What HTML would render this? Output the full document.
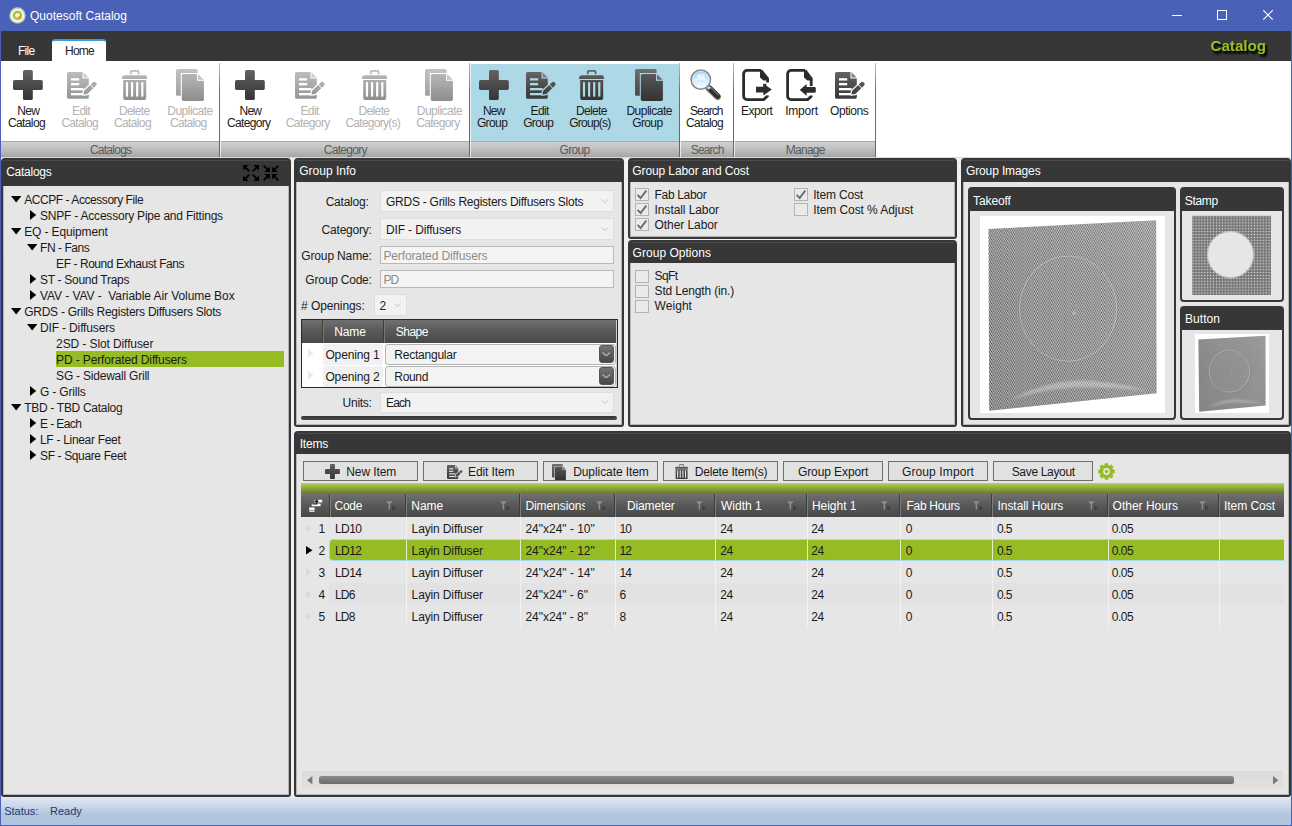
<!DOCTYPE html>
<html>
<head>
<meta charset="utf-8">
<title>Quotesoft Catalog</title>
<style>
*{box-sizing:border-box;margin:0;padding:0}
html,body{width:1292px;height:826px;overflow:hidden;background:#f0f0f0}
body{font-family:"Liberation Sans",sans-serif;font-size:12px;color:#1a1a1a;position:relative}
.abs{position:absolute}
.t{position:absolute;white-space:nowrap;line-height:14px;font-size:12px}
#win{position:absolute;left:0;top:0;width:1292px;height:826px;background:#f0f0f0;overflow:hidden}
.panel{position:absolute;background:#e6e6e6;border:2px solid #373737;border-radius:4px 4px 3px 3px}
.ph{position:absolute;background:#373737}
.combo{position:absolute;background:#f2f2f2;border:1px solid #dedede}
.tb{position:absolute;background:#f4f4f4;border:1px solid #b9b9b9}
.cb{position:absolute;width:14px;height:13px;background:#eaeaea;border:1px solid #b4b4b4}
.btn{position:absolute;top:461px;height:20px;background:#e1e1e1;border:1px solid #6f6f6f}
.gh{position:absolute;background:linear-gradient(#707070 0%,#5a5a5a 45%,#484848 100%)}
</style>
</head>
<body>
<div id="win">
<svg width="0" height="0" style="position:absolute"><defs>
<linearGradient id="gE" gradientUnits="userSpaceOnUse" x1="0" y1="0" x2="0" y2="32"><stop offset="0" stop-color="#646464"/><stop offset="0.45" stop-color="#4a4a4a"/><stop offset="1" stop-color="#333"/></linearGradient>
<linearGradient id="gD" gradientUnits="userSpaceOnUse" x1="0" y1="0" x2="0" y2="32"><stop offset="0" stop-color="#bcbcbc"/><stop offset="0.45" stop-color="#a8a8a8"/><stop offset="1" stop-color="#8c8c8c"/></linearGradient>
<linearGradient id="gLens" x1="0" y1="0" x2="0" y2="1"><stop offset="0" stop-color="#8fd0f6"/><stop offset="0.45" stop-color="#c9e9fb"/><stop offset="1" stop-color="#ffffff"/></linearGradient>
<linearGradient id="gHandle" x1="0" y1="0" x2="1" y2="0"><stop offset="0" stop-color="#8a8a8a"/><stop offset="0.5" stop-color="#3a3a3a"/><stop offset="1" stop-color="#222"/></linearGradient>
<linearGradient id="gPE" gradientUnits="userSpaceOnUse" x1="0" y1="0" x2="17" y2="0"><stop offset="0" stop-color="#3c3c3c"/><stop offset="1" stop-color="#555"/></linearGradient>
<linearGradient id="gPD" gradientUnits="userSpaceOnUse" x1="0" y1="0" x2="17" y2="0"><stop offset="0" stop-color="#959595"/><stop offset="1" stop-color="#aeaeae"/></linearGradient>
</defs></svg>
<div class="abs" style="left:0px;top:0px;width:1292px;height:31px;background:#4961b6"></div>
<svg class="abs" style="left:9px;top:7px" width="17" height="17" viewBox="0 0 17 17"><circle cx="8.5" cy="8.5" r="8.2" fill="#c6c8bc"/><circle cx="8.5" cy="8.5" r="6.8" fill="#f3f3e6"/><circle cx="8.5" cy="8.4" r="3.5" fill="none" stroke="#a6be2c" stroke-width="2.1"/><path d="M9.4 9.4L12 12" stroke="#e0902a" stroke-width="1.6"/></svg>
<div class="t" style="left:30.00px;top:8.84px;letter-spacing:0.016px;color:#fff;">Quotesoft Catalog</div>
<svg class="abs" style="left:1172px;top:10px" width="102" height="11" viewBox="0 0 102 11" fill="none" stroke="#fff" stroke-width="1"><path d="M0 5.5H10"/><rect x="45.5" y="0.5" width="9" height="9"/><path d="M91.3 0.3L100.7 9.7M100.7 0.3L91.3 9.7" stroke-width="1.15"/></svg>
<div class="abs" style="left:1px;top:31px;width:1290px;height:30px;background:#373737"></div>
<div class="t" style="left:18.00px;top:43.84px;letter-spacing:-0.709px;color:#fff;">File</div>
<div class="abs" style="left:52px;top:39px;width:54px;height:22px;background:#fff;border-radius:3px 3px 0 0;border-top:2px solid #3f9ad6"></div>
<div class="t" style="left:65.00px;top:43.84px;letter-spacing:-0.752px;color:#222;">Home</div>
<div class="t" style="left:1210.50px;top:36.80px;font-size:15px;line-height:17px;letter-spacing:0.070px;color:#97bf27;font-weight:bold;text-shadow:2px 2.5px 2px #000,1px 1px 1px #111;">Catalog</div>
<div class="abs" style="left:1px;top:61px;width:1290px;height:96px;background:#fff"></div>
<div class="abs" style="left:1px;top:141px;width:875px;height:16px;background:linear-gradient(#cfcfcf,#c2c2c2 40%,#a6a6a6);border-top:1px solid #a9a9a9"></div>
<div class="abs" style="left:1px;top:157px;width:1290px;height:1px;background:#d6d6d6"></div>
<div class="abs" style="left:470px;top:64px;width:209px;height:77px;background:#add8e6"></div>
<div class="abs" style="left:219px;top:63px;width:1px;height:94px;background:linear-gradient(#bdbdbd,#6e6e6e 30%,#666)"></div>
<div class="abs" style="left:220px;top:63px;width:1px;height:94px;background:#fff;opacity:.7"></div>
<div class="abs" style="left:469px;top:63px;width:1px;height:94px;background:linear-gradient(#bdbdbd,#6e6e6e 30%,#666)"></div>
<div class="abs" style="left:470px;top:63px;width:1px;height:94px;background:#fff;opacity:.7"></div>
<div class="abs" style="left:679px;top:63px;width:1px;height:94px;background:linear-gradient(#bdbdbd,#6e6e6e 30%,#666)"></div>
<div class="abs" style="left:680px;top:63px;width:1px;height:94px;background:#fff;opacity:.7"></div>
<div class="abs" style="left:733px;top:63px;width:1px;height:94px;background:linear-gradient(#bdbdbd,#6e6e6e 30%,#666)"></div>
<div class="abs" style="left:734px;top:63px;width:1px;height:94px;background:#fff;opacity:.7"></div>
<div class="abs" style="left:875px;top:63px;width:1px;height:94px;background:linear-gradient(#bdbdbd,#6e6e6e 30%,#666)"></div>
<div class="abs" style="left:876px;top:63px;width:1px;height:94px;background:#fff;opacity:.7"></div>
<svg class="abs" style="left:13px;top:70px;" width="30" height="30" viewBox="0 0 30 30"><g fill="url(#gE)"><rect x="10" y="0" width="9.8" height="30" rx="1.6"/><rect x="0" y="10.1" width="29.8" height="9.8" rx="1.6"/></g></svg>
<div class="t" style="left:17.30px;top:103.84px;letter-spacing:-0.702px;color:#1a1a1a;">New</div>
<div class="t" style="left:8.00px;top:115.84px;letter-spacing:-0.623px;color:#1a1a1a;">Catalog</div>
<svg class="abs" style="left:66.8px;top:72px;" width="30" height="27" viewBox="0 0 30 27"><path fill="url(#gD)" d="M1.6 0H15.9L21.8 5.9V25.2a1.6 1.6 0 0 1-1.6 1.6H1.6A1.6 1.6 0 0 1 0 25.2V1.6A1.6 1.6 0 0 1 1.6 0Z"/><path fill="#fff" d="M15.5 -0.2V6.5H22V-0.2Z"/><path fill="#cdcdcd" d="M16.5 0.3L21.7 5.5H16.5Z"/><g fill="#fff"><rect x="4" y="6.2" width="8.2" height="2.3"/><rect x="4" y="11" width="8.2" height="2.3"/><rect x="4" y="16" width="12.5" height="2.3"/><rect x="4" y="21" width="12.5" height="2.3"/></g><g transform="translate(16.3 22.7) rotate(-43.5)"><path d="M0.2 0L3.4 -2.25H11.6V2.25H3.4ZM12.5 -2.25H15.2A2.25 2.25 0 0 1 15.2 2.25H12.5Z" fill="#fff" stroke="#fff" stroke-width="2.6" stroke-linejoin="round"/><path d="M0.2 0L3.4 -2.25H11.6V2.25H3.4ZM12.5 -2.25H15.2A2.25 2.25 0 0 1 15.2 2.25H12.5Z" fill="url(#gPD)"/></g></svg>
<div class="t" style="left:72.10px;top:103.84px;letter-spacing:-0.719px;color:#b2b2b2;">Edit</div>
<div class="t" style="left:61.40px;top:115.84px;letter-spacing:-0.694px;color:#b2b2b2;">Catalog</div>
<svg class="abs" style="left:122px;top:70px;" width="25.4" height="30" viewBox="0 0 25.4 30"><path d="M8.8 4.2V1.9a1 1 0 0 1 1-1H15.6a1 1 0 0 1 1 1V4.2" fill="none" stroke="url(#gD)" stroke-width="1.7"/><path fill="url(#gD)" d="M2 5.2H23.4L25.4 7V8.9H0V7Z"/><path fill="url(#gD)" d="M1.2 10.1H24.2V27.4a2.6 2.6 0 0 1-2.6 2.6H3.8a2.6 2.6 0 0 1-2.6-2.6Z"/><g fill="#fff"><rect x="3.9" y="12.2" width="2.2" height="14.4"/><rect x="9" y="12.2" width="2.2" height="14.4"/><rect x="14.1" y="12.2" width="2.2" height="14.4"/><rect x="19.2" y="12.2" width="2.2" height="14.4"/></g></svg>
<div class="t" style="left:118.90px;top:103.84px;letter-spacing:-0.681px;color:#b2b2b2;">Delete</div>
<div class="t" style="left:113.90px;top:115.84px;letter-spacing:-0.609px;color:#b2b2b2;">Catalog</div>
<svg class="abs" style="left:176.2px;top:69px;" width="29" height="32" viewBox="0 0 29 32"><rect x="0" y="0" width="21.6" height="26.8" rx="1.6" fill="url(#gD)" opacity="0.9"/><rect x="4.8" y="4" width="24" height="28" fill="#fff"/><path fill="url(#gD)" d="M7.4 5H21.4L27.9 11.2V30.3a1.6 1.6 0 0 1-1.6 1.6H7.4a1.6 1.6 0 0 1-1.6-1.6V6.6A1.6 1.6 0 0 1 7.4 5Z"/><path fill="#fff" d="M21 4.8V11.8H28.2V4.8Z"/><path fill="#c4c4c4" d="M22 5.2L27.8 10.8H22Z"/></svg>
<div class="t" style="left:167.30px;top:103.84px;letter-spacing:-0.514px;color:#b2b2b2;">Duplicate</div>
<div class="t" style="left:170.00px;top:115.84px;letter-spacing:-0.694px;color:#b2b2b2;">Catalog</div>
<svg class="abs" style="left:235px;top:70px;" width="30" height="30" viewBox="0 0 30 30"><g fill="url(#gE)"><rect x="10" y="0" width="9.8" height="30" rx="1.6"/><rect x="0" y="10.1" width="29.8" height="9.8" rx="1.6"/></g></svg>
<div class="t" style="left:239.50px;top:103.84px;letter-spacing:-0.735px;color:#1a1a1a;">New</div>
<div class="t" style="left:227.10px;top:115.84px;letter-spacing:-0.686px;color:#1a1a1a;">Category</div>
<svg class="abs" style="left:295px;top:72px;" width="30" height="27" viewBox="0 0 30 27"><path fill="url(#gD)" d="M1.6 0H15.9L21.8 5.9V25.2a1.6 1.6 0 0 1-1.6 1.6H1.6A1.6 1.6 0 0 1 0 25.2V1.6A1.6 1.6 0 0 1 1.6 0Z"/><path fill="#fff" d="M15.5 -0.2V6.5H22V-0.2Z"/><path fill="#cdcdcd" d="M16.5 0.3L21.7 5.5H16.5Z"/><g fill="#fff"><rect x="4" y="6.2" width="8.2" height="2.3"/><rect x="4" y="11" width="8.2" height="2.3"/><rect x="4" y="16" width="12.5" height="2.3"/><rect x="4" y="21" width="12.5" height="2.3"/></g><g transform="translate(16.3 22.7) rotate(-43.5)"><path d="M0.2 0L3.4 -2.25H11.6V2.25H3.4ZM12.5 -2.25H15.2A2.25 2.25 0 0 1 15.2 2.25H12.5Z" fill="#fff" stroke="#fff" stroke-width="2.6" stroke-linejoin="round"/><path d="M0.2 0L3.4 -2.25H11.6V2.25H3.4ZM12.5 -2.25H15.2A2.25 2.25 0 0 1 15.2 2.25H12.5Z" fill="url(#gPD)"/></g></svg>
<div class="t" style="left:300.50px;top:103.84px;letter-spacing:-0.644px;color:#b2b2b2;">Edit</div>
<div class="t" style="left:285.80px;top:115.84px;letter-spacing:-0.599px;color:#b2b2b2;">Category</div>
<svg class="abs" style="left:362px;top:70px;" width="25.4" height="30" viewBox="0 0 25.4 30"><path d="M8.8 4.2V1.9a1 1 0 0 1 1-1H15.6a1 1 0 0 1 1 1V4.2" fill="none" stroke="url(#gD)" stroke-width="1.7"/><path fill="url(#gD)" d="M2 5.2H23.4L25.4 7V8.9H0V7Z"/><path fill="url(#gD)" d="M1.2 10.1H24.2V27.4a2.6 2.6 0 0 1-2.6 2.6H3.8a2.6 2.6 0 0 1-2.6-2.6Z"/><g fill="#fff"><rect x="3.9" y="12.2" width="2.2" height="14.4"/><rect x="9" y="12.2" width="2.2" height="14.4"/><rect x="14.1" y="12.2" width="2.2" height="14.4"/><rect x="19.2" y="12.2" width="2.2" height="14.4"/></g></svg>
<div class="t" style="left:358.50px;top:103.84px;letter-spacing:-0.631px;color:#b2b2b2;">Delete</div>
<div class="t" style="left:345.40px;top:115.84px;letter-spacing:-0.726px;color:#b2b2b2;">Category(s)</div>
<svg class="abs" style="left:425px;top:69px;" width="29" height="32" viewBox="0 0 29 32"><rect x="0" y="0" width="21.6" height="26.8" rx="1.6" fill="url(#gD)" opacity="0.9"/><rect x="4.8" y="4" width="24" height="28" fill="#fff"/><path fill="url(#gD)" d="M7.4 5H21.4L27.9 11.2V30.3a1.6 1.6 0 0 1-1.6 1.6H7.4a1.6 1.6 0 0 1-1.6-1.6V6.6A1.6 1.6 0 0 1 7.4 5Z"/><path fill="#fff" d="M21 4.8V11.8H28.2V4.8Z"/><path fill="#c4c4c4" d="M22 5.2L27.8 10.8H22Z"/></svg>
<div class="t" style="left:416.80px;top:103.84px;letter-spacing:-0.525px;color:#b2b2b2;">Duplicate</div>
<div class="t" style="left:416.20px;top:115.84px;letter-spacing:-0.674px;color:#b2b2b2;">Category</div>
<svg class="abs" style="left:479px;top:70px;" width="30" height="30" viewBox="0 0 30 30"><g fill="url(#gE)"><rect x="10" y="0" width="9.8" height="30" rx="1.6"/><rect x="0" y="10.1" width="29.8" height="9.8" rx="1.6"/></g></svg>
<div class="t" style="left:482.90px;top:103.84px;letter-spacing:-0.802px;color:#1a1a1a;">New</div>
<div class="t" style="left:476.90px;top:115.84px;letter-spacing:-0.610px;color:#1a1a1a;">Group</div>
<svg class="abs" style="left:526px;top:72px;" width="30" height="27" viewBox="0 0 30 27"><path fill="url(#gE)" d="M1.6 0H15.9L21.8 5.9V25.2a1.6 1.6 0 0 1-1.6 1.6H1.6A1.6 1.6 0 0 1 0 25.2V1.6A1.6 1.6 0 0 1 1.6 0Z"/><path fill="#add8e6" d="M15.5 -0.2V6.5H22V-0.2Z"/><path fill="#808080" d="M16.5 0.3L21.7 5.5H16.5Z"/><g fill="#add8e6"><rect x="4" y="6.2" width="8.2" height="2.3"/><rect x="4" y="11" width="8.2" height="2.3"/><rect x="4" y="16" width="12.5" height="2.3"/><rect x="4" y="21" width="12.5" height="2.3"/></g><g transform="translate(16.3 22.7) rotate(-43.5)"><path d="M0.2 0L3.4 -2.25H11.6V2.25H3.4ZM12.5 -2.25H15.2A2.25 2.25 0 0 1 15.2 2.25H12.5Z" fill="#add8e6" stroke="#add8e6" stroke-width="2.6" stroke-linejoin="round"/><path d="M0.2 0L3.4 -2.25H11.6V2.25H3.4ZM12.5 -2.25H15.2A2.25 2.25 0 0 1 15.2 2.25H12.5Z" fill="url(#gPE)"/></g></svg>
<div class="t" style="left:530.60px;top:103.84px;letter-spacing:-0.619px;color:#1a1a1a;">Edit</div>
<div class="t" style="left:523.20px;top:115.84px;letter-spacing:-0.670px;color:#1a1a1a;">Group</div>
<svg class="abs" style="left:579px;top:70px;" width="25.4" height="30" viewBox="0 0 25.4 30"><path d="M8.8 4.2V1.9a1 1 0 0 1 1-1H15.6a1 1 0 0 1 1 1V4.2" fill="none" stroke="url(#gE)" stroke-width="1.7"/><path fill="url(#gE)" d="M2 5.2H23.4L25.4 7V8.9H0V7Z"/><path fill="url(#gE)" d="M1.2 10.1H24.2V27.4a2.6 2.6 0 0 1-2.6 2.6H3.8a2.6 2.6 0 0 1-2.6-2.6Z"/><g fill="#add8e6"><rect x="3.9" y="12.2" width="2.2" height="14.4"/><rect x="9" y="12.2" width="2.2" height="14.4"/><rect x="14.1" y="12.2" width="2.2" height="14.4"/><rect x="19.2" y="12.2" width="2.2" height="14.4"/></g></svg>
<div class="t" style="left:576.00px;top:103.84px;letter-spacing:-0.665px;color:#1a1a1a;">Delete</div>
<div class="t" style="left:569.20px;top:115.84px;letter-spacing:-0.743px;color:#1a1a1a;">Group(s)</div>
<svg class="abs" style="left:635px;top:69px;" width="29" height="32" viewBox="0 0 29 32"><rect x="0" y="0" width="21.6" height="26.8" rx="1.6" fill="url(#gE)" opacity="0.9"/><rect x="4.8" y="4" width="24" height="28" fill="#add8e6"/><path fill="url(#gE)" d="M7.4 5H21.4L27.9 11.2V30.3a1.6 1.6 0 0 1-1.6 1.6H7.4a1.6 1.6 0 0 1-1.6-1.6V6.6A1.6 1.6 0 0 1 7.4 5Z"/><path fill="#add8e6" d="M21 4.8V11.8H28.2V4.8Z"/><path fill="#6e6e6e" d="M22 5.2L27.8 10.8H22Z"/></svg>
<div class="t" style="left:626.40px;top:103.84px;letter-spacing:-0.503px;color:#1a1a1a;">Duplicate</div>
<div class="t" style="left:632.20px;top:115.84px;letter-spacing:-0.610px;color:#1a1a1a;">Group</div>
<svg class="abs" style="left:690px;top:69px;" width="32" height="32" viewBox="0 0 32 32"><path d="M19.2 19.6L27.6 27.6" stroke="#777" stroke-width="6.6" stroke-linecap="round"/><path d="M19.6 19.2L27.6 27.2" stroke="#2e2e2e" stroke-width="5.2" stroke-linecap="round"/><path d="M20.6 18.4L28.2 25.8" stroke="#777" stroke-width="1.6" stroke-linecap="round" opacity="0.8"/><path d="M17.2 17.2L19.8 19.8" stroke="#d8d8d8" stroke-width="3" /><circle cx="10.8" cy="10.6" r="9.6" fill="url(#gLens)" stroke="#858585" stroke-width="1.7"/><circle cx="10.8" cy="10.6" r="8.5" fill="none" stroke="#e8f4fc" stroke-width="0.8" opacity="0.8"/><path d="M4.6 12.5A6.4 6.4 0 0 1 17 12.5A9 6 0 0 0 4.6 12.5Z" fill="#fff" opacity="0.55"/><ellipse cx="10.8" cy="7" rx="4" ry="2.4" fill="#fff" opacity="0.55"/></svg>
<div class="t" style="left:690.00px;top:103.84px;letter-spacing:-0.900px;color:#1a1a1a;">Search</div>
<div class="t" style="left:686.00px;top:115.84px;letter-spacing:-0.594px;color:#1a1a1a;">Catalog</div>
<svg class="abs" style="left:742px;top:69px;" width="31" height="32" viewBox="0 0 31 32"><path d="M19 1.4H5a3.4 3.4 0 0 0-3.4 3.4V27.2A3.4 3.4 0 0 0 5 30.6H21.6L25.6 27V26.6M25.6 13.4V9.6L19 1.4" fill="none" stroke="#2c2c2c" stroke-width="2.8" stroke-linejoin="round"/><path fill="#2c2c2c" d="M18 1.2L26.6 9.4V11.6H21.4L18 8.6Z"/><path fill="#2c2c2c" d="M14 17.8H21.4V14.7L29.8 20.6L21.4 26.6V23.6H14Z"/><path fill="#2c2c2c" d="M21.4 14.8H24.2V17.2H21.4Z"/></svg>
<div class="t" style="left:741.00px;top:103.84px;letter-spacing:-0.547px;color:#1a1a1a;">Export</div>
<svg class="abs" style="left:786px;top:69px;" width="31" height="32" viewBox="0 0 31 32"><path d="M19 1.4H5a3.4 3.4 0 0 0-3.4 3.4V27.2A3.4 3.4 0 0 0 5 30.6H21.6L25.2 27.4V26.4M25.2 17V9.6L19 1.4" fill="none" stroke="#2c2c2c" stroke-width="2.8" stroke-linejoin="round"/><path fill="#2c2c2c" d="M18 1.2L26.4 9.4V11.6H21.4L18 8.6Z"/><path fill="#2c2c2c" d="M13.8 21L20.6 15V18H28.4a1.4 1.4 0 0 1 1.4 1.4V22.400000000000002a1.4 1.4 0 0 1-1.4 1.4H20.6V26.8Z"/></svg>
<div class="t" style="left:785.30px;top:103.84px;letter-spacing:-0.268px;color:#1a1a1a;">Import</div>
<svg class="abs" style="left:835px;top:72px;" width="30" height="27" viewBox="0 0 30 27"><path fill="url(#gE)" d="M1.6 0H15.9L21.8 5.9V25.2a1.6 1.6 0 0 1-1.6 1.6H1.6A1.6 1.6 0 0 1 0 25.2V1.6A1.6 1.6 0 0 1 1.6 0Z"/><path fill="#fff" d="M15.5 -0.2V6.5H22V-0.2Z"/><path fill="#808080" d="M16.5 0.3L21.7 5.5H16.5Z"/><g fill="#fff"><rect x="4" y="6.2" width="8.2" height="2.3"/><rect x="4" y="11" width="8.2" height="2.3"/><rect x="4" y="16" width="12.5" height="2.3"/><rect x="4" y="21" width="12.5" height="2.3"/></g><g transform="translate(16.3 22.7) rotate(-43.5)"><path d="M0.2 0L3.4 -2.25H11.6V2.25H3.4ZM12.5 -2.25H15.2A2.25 2.25 0 0 1 15.2 2.25H12.5Z" fill="#fff" stroke="#fff" stroke-width="2.6" stroke-linejoin="round"/><path d="M0.2 0L3.4 -2.25H11.6V2.25H3.4ZM12.5 -2.25H15.2A2.25 2.25 0 0 1 15.2 2.25H12.5Z" fill="url(#gPE)"/></g></svg>
<div class="t" style="left:830.00px;top:103.84px;letter-spacing:-0.436px;color:#1a1a1a;">Options</div>
<div class="t" style="left:89.90px;top:142.84px;letter-spacing:-0.733px;color:#5a5a5a;">Catalogs</div>
<div class="t" style="left:323.70px;top:142.84px;letter-spacing:-0.686px;color:#5a5a5a;">Category</div>
<div class="t" style="left:559.50px;top:142.84px;letter-spacing:-0.650px;color:#5a5a5a;">Group</div>
<div class="t" style="left:690.80px;top:142.84px;letter-spacing:-0.900px;color:#5a5a5a;">Search</div>
<div class="t" style="left:785.70px;top:142.84px;letter-spacing:-0.711px;color:#5a5a5a;">Manage</div>
<div class="panel" style="left:1px;top:158px;width:290px;height:639px"></div>
<div class="abs" style="left:2px;top:159px;width:288px;height:27px;background:#373737;border-radius:3px 3px 0 0"></div>
<div class="abs" style="left:3px;top:160px;width:286px;height:635px;border:1px solid rgba(55,55,55,0.28);border-top-color:rgba(255,255,255,0.10);border-radius:2px;pointer-events:none"></div>
<div class="t" style="left:6.20px;top:165.34px;letter-spacing:-0.258px;color:#fff;">Catalogs</div>
<svg class="abs" style="left:243px;top:165px" width="16" height="16" viewBox="0 0 16 16" fill="#000" stroke="#000"><g><path d="M0 0H5.6L0 5.6Z" stroke="none"/><path d="M1.5 1.5L6.3 6.3" stroke-width="1.8" fill="none"/></g><g transform="translate(16 0) scale(-1 1)"><path d="M0 0H5.6L0 5.6Z" stroke="none"/><path d="M1.5 1.5L6.3 6.3" stroke-width="1.8" fill="none"/></g><g transform="translate(0 16) scale(1 -1)"><path d="M0 0H5.6L0 5.6Z" stroke="none"/><path d="M1.5 1.5L6.3 6.3" stroke-width="1.8" fill="none"/></g><g transform="translate(16 16) scale(-1 -1)"><path d="M0 0H5.6L0 5.6Z" stroke="none"/><path d="M1.5 1.5L6.3 6.3" stroke-width="1.8" fill="none"/></g></svg>
<svg class="abs" style="left:263px;top:165px" width="16" height="16" viewBox="0 0 16 16" fill="#000" stroke="#000"><g><path d="M6.9 6.9H1.5L6.9 1.5Z" stroke="none"/><path d="M0.6 0.6L5.4 5.4" stroke-width="1.7" fill="none"/></g><g transform="translate(16 0) scale(-1 1)"><path d="M6.9 6.9H1.5L6.9 1.5Z" stroke="none"/><path d="M0.6 0.6L5.4 5.4" stroke-width="1.7" fill="none"/></g><g transform="translate(0 16) scale(1 -1)"><path d="M6.9 6.9H1.5L6.9 1.5Z" stroke="none"/><path d="M0.6 0.6L5.4 5.4" stroke-width="1.7" fill="none"/></g><g transform="translate(16 16) scale(-1 -1)"><path d="M6.9 6.9H1.5L6.9 1.5Z" stroke="none"/><path d="M0.6 0.6L5.4 5.4" stroke-width="1.7" fill="none"/></g></svg>
<svg class="abs" style="left:11px;top:196px" width="11" height="7" viewBox="0 0 11 7"><path d="M0 0H10.4L5.2 6.4Z" fill="#000"/></svg>
<div class="t" style="left:24.20px;top:192.84px;letter-spacing:-0.440px;white-space:pre;">ACCPF - Accessory File</div>
<svg class="abs" style="left:29.5px;top:210px" width="7" height="11" viewBox="0 0 7 11"><path d="M0 0L6.2 5L0 10Z" fill="#000"/></svg>
<div class="t" style="left:40.00px;top:208.84px;letter-spacing:-0.211px;white-space:pre;">SNPF - Accessory Pipe and Fittings</div>
<svg class="abs" style="left:11px;top:228px" width="11" height="7" viewBox="0 0 11 7"><path d="M0 0H10.4L5.2 6.4Z" fill="#000"/></svg>
<div class="t" style="left:24.20px;top:224.84px;letter-spacing:-0.134px;white-space:pre;">EQ - Equipment</div>
<svg class="abs" style="left:27px;top:244px" width="11" height="7" viewBox="0 0 11 7"><path d="M0 0H10.4L5.2 6.4Z" fill="#000"/></svg>
<div class="t" style="left:40.00px;top:240.84px;letter-spacing:-0.449px;white-space:pre;">FN - Fans</div>
<div class="t" style="left:56.10px;top:256.84px;letter-spacing:-0.438px;white-space:pre;">EF - Round Exhaust Fans</div>
<svg class="abs" style="left:29.5px;top:274px" width="7" height="11" viewBox="0 0 7 11"><path d="M0 0L6.2 5L0 10Z" fill="#000"/></svg>
<div class="t" style="left:40.00px;top:272.84px;letter-spacing:-0.295px;white-space:pre;">ST - Sound Traps</div>
<svg class="abs" style="left:29.5px;top:290px" width="7" height="11" viewBox="0 0 7 11"><path d="M0 0L6.2 5L0 10Z" fill="#000"/></svg>
<div class="t" style="left:40.00px;top:288.84px;letter-spacing:-0.066px;white-space:pre;">VAV - VAV -  Variable Air Volume Box</div>
<svg class="abs" style="left:11px;top:308px" width="11" height="7" viewBox="0 0 11 7"><path d="M0 0H10.4L5.2 6.4Z" fill="#000"/></svg>
<div class="t" style="left:24.20px;top:304.84px;letter-spacing:-0.263px;white-space:pre;">GRDS - Grills Registers Diffusers Slots</div>
<svg class="abs" style="left:27px;top:324px" width="11" height="7" viewBox="0 0 11 7"><path d="M0 0H10.4L5.2 6.4Z" fill="#000"/></svg>
<div class="t" style="left:40.00px;top:320.84px;letter-spacing:-0.148px;white-space:pre;">DIF - Diffusers</div>
<div class="t" style="left:56.10px;top:336.84px;letter-spacing:-0.102px;white-space:pre;">2SD - Slot Diffuser</div>
<div class="abs" style="left:56px;top:351px;width:228px;height:16px;background:#96bc23"></div>
<div class="t" style="left:56.10px;top:352.84px;letter-spacing:-0.125px;white-space:pre;">PD - Perforated Diffusers</div>
<div class="t" style="left:56.10px;top:368.84px;letter-spacing:-0.219px;white-space:pre;">SG - Sidewall Grill</div>
<svg class="abs" style="left:29.5px;top:386px" width="7" height="11" viewBox="0 0 7 11"><path d="M0 0L6.2 5L0 10Z" fill="#000"/></svg>
<div class="t" style="left:40.00px;top:384.84px;letter-spacing:-0.163px;white-space:pre;">G - Grills</div>
<svg class="abs" style="left:11px;top:404px" width="11" height="7" viewBox="0 0 11 7"><path d="M0 0H10.4L5.2 6.4Z" fill="#000"/></svg>
<div class="t" style="left:24.20px;top:400.84px;letter-spacing:-0.297px;white-space:pre;">TBD - TBD Catalog</div>
<svg class="abs" style="left:29.5px;top:418px" width="7" height="11" viewBox="0 0 7 11"><path d="M0 0L6.2 5L0 10Z" fill="#000"/></svg>
<div class="t" style="left:40.00px;top:416.84px;letter-spacing:-0.590px;white-space:pre;">E - Each</div>
<svg class="abs" style="left:29.5px;top:434px" width="7" height="11" viewBox="0 0 7 11"><path d="M0 0L6.2 5L0 10Z" fill="#000"/></svg>
<div class="t" style="left:40.00px;top:432.84px;letter-spacing:-0.304px;white-space:pre;">LF - Linear Feet</div>
<svg class="abs" style="left:29.5px;top:450px" width="7" height="11" viewBox="0 0 7 11"><path d="M0 0L6.2 5L0 10Z" fill="#000"/></svg>
<div class="t" style="left:40.00px;top:448.84px;letter-spacing:-0.365px;white-space:pre;">SF - Square Feet</div>
<div class="panel" style="left:294px;top:158px;width:330px;height:269px"></div>
<div class="abs" style="left:295px;top:159px;width:328px;height:23px;background:#373737;border-radius:3px 3px 0 0"></div>
<div class="abs" style="left:296px;top:160px;width:326px;height:265px;border:1px solid rgba(55,55,55,0.28);border-top-color:rgba(255,255,255,0.10);border-radius:2px;pointer-events:none"></div>
<div class="t" style="left:299.20px;top:164.44px;letter-spacing:0.010px;color:#fff;">Group Info</div>
<div class="combo" style="left:380px;top:190px;width:234px;height:22px"></div>
<div class="combo" style="left:380px;top:218px;width:234px;height:22px"></div>
<div class="tb" style="left:380px;top:246px;width:234px;height:18px"></div>
<div class="tb" style="left:380px;top:270px;width:234px;height:18px"></div>
<div class="combo" style="left:373.5px;top:294px;width:33px;height:22px"></div>
<div class="combo" style="left:380px;top:391.5px;width:234px;height:21.5px"></div>
<svg class="abs" style="left:600.7px;top:198.9px" width="7.6" height="4.2" viewBox="0 0 7.6 4.2"><path d="M0.5 0.5L3.8 3.5L7.1 0.5" fill="none" stroke="#c3c3c3" stroke-width="1"/></svg>
<svg class="abs" style="left:600.7px;top:226.9px" width="7.6" height="4.2" viewBox="0 0 7.6 4.2"><path d="M0.5 0.5L3.8 3.5L7.1 0.5" fill="none" stroke="#c3c3c3" stroke-width="1"/></svg>
<svg class="abs" style="left:394.2px;top:302.9px" width="7.6" height="4.2" viewBox="0 0 7.6 4.2"><path d="M0.5 0.5L3.8 3.5L7.1 0.5" fill="none" stroke="#c3c3c3" stroke-width="1"/></svg>
<svg class="abs" style="left:600.7px;top:400.4px" width="7.6" height="4.2" viewBox="0 0 7.6 4.2"><path d="M0.5 0.5L3.8 3.5L7.1 0.5" fill="none" stroke="#c3c3c3" stroke-width="1"/></svg>
<div class="t" style="left:325.70px;top:194.84px;letter-spacing:-0.237px;">Catalog:</div>
<div class="t" style="left:321.60px;top:222.84px;letter-spacing:-0.214px;">Category:</div>
<div class="t" style="left:301.30px;top:248.84px;letter-spacing:-0.148px;">Group Name:</div>
<div class="t" style="left:305.30px;top:272.84px;letter-spacing:-0.210px;">Group Code:</div>
<div class="t" style="left:301.10px;top:298.84px;letter-spacing:-0.101px;"># Openings:</div>
<div class="t" style="left:342.60px;top:395.84px;letter-spacing:-0.279px;">Units:</div>
<div class="t" style="left:386.00px;top:194.84px;letter-spacing:-0.255px;">GRDS - Grills Registers Diffusers Slots</div>
<div class="t" style="left:386.00px;top:222.84px;letter-spacing:-0.141px;">DIF - Diffusers</div>
<div class="t" style="left:383.40px;top:248.84px;letter-spacing:-0.120px;color:#8c8c8c;">Perforated Diffusers</div>
<div class="t" style="left:383.40px;top:272.84px;letter-spacing:-0.785px;color:#8c8c8c;">PD</div>
<div class="t" style="left:379.50px;top:298.84px;letter-spacing:-0.150px;color:#222;">2</div>
<div class="t" style="left:386.00px;top:395.84px;letter-spacing:-0.838px;">Each</div>
<div class="abs" style="left:301px;top:319px;width:317px;height:69px;background:#fff;border:1px solid #2a2a2a"></div>
<div class="gh" style="left:302px;top:320px;width:314px;height:23px"></div>
<div class="abs" style="left:616px;top:320px;width:1px;height:67px;background:#cfcfcf"></div>
<div class="abs" style="left:322px;top:320px;width:1px;height:23px;background:#3c3c3c"></div>
<div class="abs" style="left:323px;top:320px;width:1px;height:23px;background:#777"></div>
<div class="abs" style="left:383px;top:320px;width:1px;height:23px;background:#3c3c3c"></div>
<div class="abs" style="left:384px;top:320px;width:1px;height:23px;background:#777"></div>
<div class="t" style="left:334.30px;top:324.84px;letter-spacing:-0.152px;color:#fff;">Name</div>
<div class="t" style="left:395.70px;top:324.84px;letter-spacing:-0.480px;color:#fff;">Shape</div>
<div class="abs" style="left:323px;top:344px;width:60px;height:21px;background:#f1f1f1;border-radius:2px"></div>
<svg class="abs" style="left:307.5px;top:349px" width="6" height="9" viewBox="0 0 6 9"><path d="M0 0L5.4 4.3L0 8.6Z" fill="#e9e9e9"/></svg>
<div class="abs" style="left:384.5px;top:343.5px;width:231.5px;height:21.5px;background:#f3f3f3;border:1px solid #b4b4b4;border-radius:3px"></div>
<div class="abs" style="left:599px;top:345px;width:15px;height:18px;background:linear-gradient(#747474,#474747);border-radius:3px;border:1px solid #555"></div>
<svg class="abs" style="left:602.25px;top:351.7px" width="8.5" height="4.6" viewBox="0 0 8.5 4.6"><path d="M0.5 0.5L4.25 3.9L8 0.5" fill="none" stroke="#a9a9a9" stroke-width="1.5"/></svg>
<div class="t" style="left:325.40px;top:347.54px;letter-spacing:-0.131px;">Opening 1</div>
<div class="t" style="left:394.30px;top:347.54px;letter-spacing:-0.228px;">Rectangular</div>
<div class="abs" style="left:323px;top:366px;width:60px;height:21px;background:#f1f1f1;border-radius:2px"></div>
<svg class="abs" style="left:307.5px;top:371px" width="6" height="9" viewBox="0 0 6 9"><path d="M0 0L5.4 4.3L0 8.6Z" fill="#e9e9e9"/></svg>
<div class="abs" style="left:384.5px;top:365.5px;width:231.5px;height:21.5px;background:#f3f3f3;border:1px solid #b4b4b4;border-radius:3px"></div>
<div class="abs" style="left:599px;top:367px;width:15px;height:18px;background:linear-gradient(#747474,#474747);border-radius:3px;border:1px solid #555"></div>
<svg class="abs" style="left:602.25px;top:373.7px" width="8.5" height="4.6" viewBox="0 0 8.5 4.6"><path d="M0.5 0.5L4.25 3.9L8 0.5" fill="none" stroke="#a9a9a9" stroke-width="1.5"/></svg>
<div class="t" style="left:325.40px;top:369.54px;letter-spacing:-0.131px;">Opening 2</div>
<div class="t" style="left:394.30px;top:369.54px;letter-spacing:-0.332px;">Round</div>
<div class="abs" style="left:301px;top:415.7px;width:316px;height:4.6px;background:linear-gradient(#333,#4a4a4a);border-radius:3px"></div>
<div class="panel" style="left:628px;top:158px;width:329px;height:81px"></div>
<div class="abs" style="left:629px;top:159px;width:327px;height:23px;background:#373737;border-radius:3px 3px 0 0"></div>
<div class="abs" style="left:630px;top:160px;width:325px;height:77px;border:1px solid rgba(55,55,55,0.28);border-top-color:rgba(255,255,255,0.10);border-radius:2px;pointer-events:none"></div>
<div class="t" style="left:632.30px;top:164.44px;letter-spacing:-0.102px;color:#fff;">Group Labor and Cost</div>
<div class="cb" style="left:635px;top:188px"></div>
<svg class="abs" style="left:635px;top:188px" width="14" height="13" viewBox="0 0 14 13"><path d="M2.6 6.9L5.6 10.1L11.3 2.6" fill="none" stroke="#6a6a6a" stroke-width="1.9"/></svg>
<div class="t" style="left:654.60px;top:187.84px;letter-spacing:-0.334px;">Fab Labor</div>
<div class="cb" style="left:635px;top:203px"></div>
<svg class="abs" style="left:635px;top:203px" width="14" height="13" viewBox="0 0 14 13"><path d="M2.6 6.9L5.6 10.1L11.3 2.6" fill="none" stroke="#6a6a6a" stroke-width="1.9"/></svg>
<div class="t" style="left:654.60px;top:202.84px;letter-spacing:-0.075px;">Install Labor</div>
<div class="cb" style="left:635px;top:218px"></div>
<svg class="abs" style="left:635px;top:218px" width="14" height="13" viewBox="0 0 14 13"><path d="M2.6 6.9L5.6 10.1L11.3 2.6" fill="none" stroke="#6a6a6a" stroke-width="1.9"/></svg>
<div class="t" style="left:654.60px;top:217.84px;letter-spacing:-0.076px;">Other Labor</div>
<div class="cb" style="left:794px;top:188px"></div>
<svg class="abs" style="left:794px;top:188px" width="14" height="13" viewBox="0 0 14 13"><path d="M2.6 6.9L5.6 10.1L11.3 2.6" fill="none" stroke="#6a6a6a" stroke-width="1.9"/></svg>
<div class="t" style="left:813.20px;top:187.84px;letter-spacing:-0.172px;">Item Cost</div>
<div class="cb" style="left:794px;top:203px"></div>
<div class="t" style="left:813.20px;top:202.84px;letter-spacing:-0.076px;">Item Cost % Adjust</div>
<div class="panel" style="left:628px;top:240px;width:329px;height:187px"></div>
<div class="abs" style="left:629px;top:241px;width:327px;height:22px;background:#373737;border-radius:3px 3px 0 0"></div>
<div class="abs" style="left:630px;top:242px;width:325px;height:183px;border:1px solid rgba(55,55,55,0.28);border-top-color:rgba(255,255,255,0.10);border-radius:2px;pointer-events:none"></div>
<div class="t" style="left:632.60px;top:245.54px;letter-spacing:0.028px;color:#fff;">Group Options</div>
<div class="cb" style="left:635px;top:269.5px"></div>
<div class="t" style="left:654.60px;top:268.84px;letter-spacing:-0.610px;">SqFt</div>
<div class="cb" style="left:635px;top:284.8px"></div>
<div class="t" style="left:654.60px;top:284.04px;letter-spacing:-0.166px;">Std Length (in.)</div>
<div class="cb" style="left:635px;top:300.1px"></div>
<div class="t" style="left:654.60px;top:299.24px;letter-spacing:0.045px;">Weight</div>
<div class="panel" style="left:961px;top:158px;width:330px;height:269px"></div>
<div class="abs" style="left:962px;top:159px;width:328px;height:23px;background:#373737;border-radius:3px 3px 0 0"></div>
<div class="abs" style="left:963px;top:160px;width:326px;height:265px;border:1px solid rgba(55,55,55,0.28);border-top-color:rgba(255,255,255,0.10);border-radius:2px;pointer-events:none"></div>
<div class="t" style="left:966.00px;top:164.44px;letter-spacing:-0.128px;color:#fff;">Group Images</div>
<div class="panel" style="left:968px;top:187px;width:208px;height:233px;border-radius:4px"></div>
<div class="abs" style="left:969px;top:188px;width:206px;height:23px;background:#373737;border-radius:3px 3px 0 0"></div>
<div class="t" style="left:973.00px;top:193.84px;letter-spacing:-0.096px;color:#fff;">Takeoff</div>
<div class="panel" style="left:1180px;top:187px;width:104px;height:115px;border-radius:4px"></div>
<div class="abs" style="left:1181px;top:188px;width:102px;height:23px;background:#373737;border-radius:3px 3px 0 0"></div>
<div class="t" style="left:1184.70px;top:193.84px;letter-spacing:-0.276px;color:#fff;">Stamp</div>
<div class="panel" style="left:1180px;top:306px;width:104px;height:114px;border-radius:4px"></div>
<div class="abs" style="left:1181px;top:307px;width:102px;height:23px;background:#373737;border-radius:3px 3px 0 0"></div>
<div class="t" style="left:1185.00px;top:311.84px;letter-spacing:0.068px;color:#fff;">Button</div>
<div class="abs" style="left:980px;top:216px;width:184.6px;height:197.3px;background:#fff"></div>
<svg class="abs" style="left:0;top:0" width="1292" height="826" viewBox="0 0 1292 826"><defs><pattern id="pT" patternUnits="userSpaceOnUse" width="2.31" height="4" patternTransform="skewY(-2.6)"><rect width="2.31" height="4" fill="#9e9e9e"/><rect x="0" y="0" width="1.1088" height="1" fill="#505050"/><rect x="1.155" y="2" width="1.1088" height="1" fill="#505050"/><rect x="1.155" y="0" width="1.155" height="1" fill="#d2d2d2"/><rect x="0" y="2" width="1.155" height="1" fill="#d2d2d2"/></pattern><linearGradient id="pTL" x1="0" y1="0" x2="1" y2="0.15"><stop offset="0" stop-color="#000" stop-opacity="0.07"/><stop offset="0.35" stop-color="#000" stop-opacity="0.03"/><stop offset="1" stop-color="#fff" stop-opacity="0.05"/></linearGradient><linearGradient id="pTV" x1="0" y1="0" x2="0" y2="1"><stop offset="0" stop-color="#fff" stop-opacity="0.05"/><stop offset="0.6" stop-color="#000" stop-opacity="0.02"/><stop offset="1" stop-color="#000" stop-opacity="0.05"/></linearGradient><filter id="pTB" x="-10%" y="-40%" width="120%" height="180%"><feGaussianBlur stdDeviation="0.9"/></filter><clipPath id="pTC"><polygon points="988.5,229 1156.2,220.2 1156.6,393.3 989.2,410.8"/></clipPath></defs><polygon points="988.5,229 1156.2,220.2 1156.6,393.3 989.2,410.8" fill="url(#pT)"/><polygon points="988.5,229 1156.2,220.2 1156.6,393.3 989.2,410.8" fill="url(#pTL)"/><polygon points="988.5,229 1156.2,220.2 1156.6,393.3 989.2,410.8" fill="url(#pTV)"/><g clip-path="url(#pTC)"><path d="M1010 400Q1040 383 1075 380.6Q1112 380.5 1147 390.5Q1112 387 1078 387.6Q1044 389 1010 400Z" fill="#fff" opacity="0.30" filter="url(#pTB)"/></g><ellipse cx="1068.3" cy="308.8" rx="48.6" ry="52.6" fill="#fff" fill-opacity="0.02" stroke="#e2e2e2" stroke-width="0.9" stroke-opacity="0.6"/><ellipse cx="1069.1" cy="309.4" rx="48.6" ry="52.6" fill="none" stroke="#555" stroke-width="0.7" stroke-opacity="0.25"/><circle cx="1074" cy="313" r="1.3" fill="none" stroke="#ddd" stroke-width="0.6"/></svg>
<svg class="abs" style="left:0;top:0" width="1292" height="826" viewBox="0 0 1292 826"><defs><pattern id="pS" patternUnits="userSpaceOnUse" x="1191.61" y="215.514" width="2.924" height="2.924"><rect width="2.924" height="2.924" fill="#717171"/><rect x="0.762" y="0.762" width="1.4" height="1.4" fill="#dedede"/></pattern><radialGradient id="stc"><stop offset="0.9" stop-color="#e6e6e6"/><stop offset="1" stop-color="#e6e6e6" stop-opacity="0"/></radialGradient></defs><rect x="1192.2" y="215.8" width="78.8" height="79.2" fill="url(#pS)"/><circle cx="1230.5" cy="254.6" r="24.4" fill="url(#stc)"/></svg>
<div class="abs" style="left:1194.6px;top:334px;width:74.5px;height:79.3px;background:#fff"></div>
<svg class="abs" style="left:0;top:0" width="1292" height="826" viewBox="0 0 1292 826"><defs><pattern id="pB" patternUnits="userSpaceOnUse" width="1.55" height="2.6" patternTransform="skewY(-2.6)"><rect width="1.55" height="2.6" fill="#959595"/><rect x="0" y="0" width="0.744" height="0.65" fill="#777"/><rect x="0.775" y="1.3" width="0.744" height="0.65" fill="#777"/><rect x="0.775" y="0" width="0.775" height="0.65" fill="#a9a9a9"/><rect x="0" y="1.3" width="0.775" height="0.65" fill="#a9a9a9"/></pattern><linearGradient id="pBL" x1="0" y1="0" x2="1" y2="0.15"><stop offset="0" stop-color="#000" stop-opacity="0.07"/><stop offset="0.35" stop-color="#000" stop-opacity="0.03"/><stop offset="1" stop-color="#fff" stop-opacity="0.05"/></linearGradient><linearGradient id="pBV" x1="0" y1="0" x2="0" y2="1"><stop offset="0" stop-color="#fff" stop-opacity="0.05"/><stop offset="0.6" stop-color="#000" stop-opacity="0.02"/><stop offset="1" stop-color="#000" stop-opacity="0.05"/></linearGradient><filter id="pBB" x="-10%" y="-40%" width="120%" height="180%"><feGaussianBlur stdDeviation="0.9"/></filter><clipPath id="pBC"><polygon points="1198.4,339.6 1265.5,335.8 1265.6,405.5 1199.2,411.7"/></clipPath></defs><polygon points="1198.4,339.6 1265.5,335.8 1265.6,405.5 1199.2,411.7" fill="url(#pB)"/><polygon points="1198.4,339.6 1265.5,335.8 1265.6,405.5 1199.2,411.7" fill="url(#pBL)"/><polygon points="1198.4,339.6 1265.5,335.8 1265.6,405.5 1199.2,411.7" fill="url(#pBV)"/><g clip-path="url(#pBC)"><path d="M1207 407.5Q1220 400.5 1233 399.5Q1248 399.3 1262 403Q1248 402 1234 402.2Q1220 403 1207 407.5Z" fill="#fff" opacity="0.30" filter="url(#pBB)"/></g><ellipse cx="1229.6" cy="371.2" rx="20.1" ry="21" fill="#fff" fill-opacity="0.02" stroke="#e2e2e2" stroke-width="0.63" stroke-opacity="0.6"/><ellipse cx="1230.4" cy="371.8" rx="20.1" ry="21" fill="none" stroke="#555" stroke-width="0.7" stroke-opacity="0.25"/><circle cx="1231.5" cy="373" r="0.6" fill="#ccc" opacity="0.7"/></svg>
<div class="panel" style="left:294px;top:431px;width:997px;height:366px"></div>
<div class="abs" style="left:295px;top:432px;width:995px;height:22px;background:#373737;border-radius:3px 3px 0 0"></div>
<div class="abs" style="left:296px;top:433px;width:993px;height:362px;border:1px solid rgba(55,55,55,0.28);border-top-color:rgba(255,255,255,0.10);border-radius:2px;pointer-events:none"></div>
<div class="t" style="left:299.70px;top:436.54px;letter-spacing:-0.208px;color:#fff;">Items</div>
<div class="btn" style="left:303px;width:115px"></div>
<div class="btn" style="left:423px;width:115px"></div>
<div class="btn" style="left:543px;width:115px"></div>
<div class="btn" style="left:663px;width:115px"></div>
<div class="btn" style="left:783px;width:100px"></div>
<div class="btn" style="left:888px;width:100px"></div>
<div class="btn" style="left:993px;width:100px"></div>
<svg class="abs" style="left:325px;top:464px;" width="15" height="15" viewBox="0 0 30 30"><g fill="url(#gE)"><rect x="10" y="0" width="9.8" height="30" rx="1.6"/><rect x="0" y="10.1" width="29.8" height="9.8" rx="1.6"/></g></svg>
<div class="t" style="left:346.30px;top:464.84px;letter-spacing:-0.097px;">New Item</div>
<svg class="abs" style="left:447px;top:464.5px;" width="15.6" height="14.04" viewBox="0 0 30 27"><path fill="url(#gE)" d="M1.6 0H15.9L21.8 5.9V25.2a1.6 1.6 0 0 1-1.6 1.6H1.6A1.6 1.6 0 0 1 0 25.2V1.6A1.6 1.6 0 0 1 1.6 0Z"/><path fill="#e1e1e1" d="M15.5 -0.2V6.5H22V-0.2Z"/><path fill="#808080" d="M16.5 0.3L21.7 5.5H16.5Z"/><g fill="#e1e1e1"><rect x="4" y="6.2" width="8.2" height="2.3"/><rect x="4" y="11" width="8.2" height="2.3"/><rect x="4" y="16" width="12.5" height="2.3"/><rect x="4" y="21" width="12.5" height="2.3"/></g><g transform="translate(16.3 22.7) rotate(-43.5)"><path d="M0.2 0L3.4 -2.25H11.6V2.25H3.4ZM12.5 -2.25H15.2A2.25 2.25 0 0 1 15.2 2.25H12.5Z" fill="#e1e1e1" stroke="#e1e1e1" stroke-width="2.6" stroke-linejoin="round"/><path d="M0.2 0L3.4 -2.25H11.6V2.25H3.4ZM12.5 -2.25H15.2A2.25 2.25 0 0 1 15.2 2.25H12.5Z" fill="url(#gPE)"/></g></svg>
<div class="t" style="left:468.00px;top:464.84px;letter-spacing:-0.106px;">Edit Item</div>
<svg class="abs" style="left:552px;top:463.5px;" width="14.5" height="16" viewBox="0 0 29 32"><rect x="0" y="0" width="21.6" height="26.8" rx="1.6" fill="url(#gE)" opacity="0.9"/><rect x="4.8" y="4" width="24" height="28" fill="#e1e1e1"/><path fill="url(#gE)" d="M7.4 5H21.4L27.9 11.2V30.3a1.6 1.6 0 0 1-1.6 1.6H7.4a1.6 1.6 0 0 1-1.6-1.6V6.6A1.6 1.6 0 0 1 7.4 5Z"/><path fill="#e1e1e1" d="M21 4.8V11.8H28.2V4.8Z"/><path fill="#6e6e6e" d="M22 5.2L27.8 10.8H22Z"/></svg>
<div class="t" style="left:573.20px;top:464.84px;letter-spacing:-0.079px;">Duplicate Item</div>
<svg class="abs" style="left:674.7px;top:463.5px;" width="13.208" height="15.6" viewBox="0 0 25.4 30"><path d="M8.8 4.2V1.9a1 1 0 0 1 1-1H15.6a1 1 0 0 1 1 1V4.2" fill="none" stroke="url(#gE)" stroke-width="1.7"/><path fill="url(#gE)" d="M2 5.2H23.4L25.4 7V8.9H0V7Z"/><path fill="url(#gE)" d="M1.2 10.1H24.2V27.4a2.6 2.6 0 0 1-2.6 2.6H3.8a2.6 2.6 0 0 1-2.6-2.6Z"/><g fill="#e1e1e1"><rect x="3.9" y="12.2" width="2.2" height="14.4"/><rect x="9" y="12.2" width="2.2" height="14.4"/><rect x="14.1" y="12.2" width="2.2" height="14.4"/><rect x="19.2" y="12.2" width="2.2" height="14.4"/></g></svg>
<div class="t" style="left:694.70px;top:464.84px;letter-spacing:-0.189px;">Delete Item(s)</div>
<div class="t" style="left:797.90px;top:464.84px;letter-spacing:-0.081px;">Group Export</div>
<div class="t" style="left:902.00px;top:464.84px;letter-spacing:0.109px;">Group Import</div>
<div class="t" style="left:1011.70px;top:464.84px;letter-spacing:-0.329px;">Save Layout</div>
<svg class="abs" style="left:1097.5px;top:462.8px" width="17" height="17" viewBox="-8.5 -8.5 17 17"><g fill="#96bc23"><rect x="-1.9" y="-8.2" width="3.8" height="4" rx="0.6" transform="rotate(0)"/><rect x="-1.9" y="-8.2" width="3.8" height="4" rx="0.6" transform="rotate(45)"/><rect x="-1.9" y="-8.2" width="3.8" height="4" rx="0.6" transform="rotate(90)"/><rect x="-1.9" y="-8.2" width="3.8" height="4" rx="0.6" transform="rotate(135)"/><rect x="-1.9" y="-8.2" width="3.8" height="4" rx="0.6" transform="rotate(180)"/><rect x="-1.9" y="-8.2" width="3.8" height="4" rx="0.6" transform="rotate(225)"/><rect x="-1.9" y="-8.2" width="3.8" height="4" rx="0.6" transform="rotate(270)"/><rect x="-1.9" y="-8.2" width="3.8" height="4" rx="0.6" transform="rotate(315)"/></g><circle r="5" fill="none" stroke="#96bc23" stroke-width="3.2"/><circle r="1.7" fill="#96bc23"/></svg>
<div class="abs" style="left:301px;top:483px;width:983px;height:10.5px;background:linear-gradient(#b9d16e 0%,#a4c04d 20%,#8aa637 50%,#72882f 82%,#66792e 100%)"></div>
<div class="gh" style="left:301px;top:493.5px;width:983px;height:23.5px"></div>
<div class="abs" style="left:329px;top:494px;width:1px;height:23px;background:#3d3d3d"></div>
<div class="abs" style="left:330px;top:494px;width:1px;height:23px;background:#7d7d7d"></div>
<div class="abs" style="left:405px;top:494px;width:1px;height:23px;background:#3d3d3d"></div>
<div class="abs" style="left:406px;top:494px;width:1px;height:23px;background:#7d7d7d"></div>
<div class="abs" style="left:519px;top:494px;width:1px;height:23px;background:#3d3d3d"></div>
<div class="abs" style="left:520px;top:494px;width:1px;height:23px;background:#7d7d7d"></div>
<div class="abs" style="left:614px;top:494px;width:1px;height:23px;background:#3d3d3d"></div>
<div class="abs" style="left:615px;top:494px;width:1px;height:23px;background:#7d7d7d"></div>
<div class="abs" style="left:714px;top:494px;width:1px;height:23px;background:#3d3d3d"></div>
<div class="abs" style="left:715px;top:494px;width:1px;height:23px;background:#7d7d7d"></div>
<div class="abs" style="left:806px;top:494px;width:1px;height:23px;background:#3d3d3d"></div>
<div class="abs" style="left:807px;top:494px;width:1px;height:23px;background:#7d7d7d"></div>
<div class="abs" style="left:899px;top:494px;width:1px;height:23px;background:#3d3d3d"></div>
<div class="abs" style="left:900px;top:494px;width:1px;height:23px;background:#7d7d7d"></div>
<div class="abs" style="left:991px;top:494px;width:1px;height:23px;background:#3d3d3d"></div>
<div class="abs" style="left:992px;top:494px;width:1px;height:23px;background:#7d7d7d"></div>
<div class="abs" style="left:1107px;top:494px;width:1px;height:23px;background:#3d3d3d"></div>
<div class="abs" style="left:1108px;top:494px;width:1px;height:23px;background:#7d7d7d"></div>
<div class="abs" style="left:1218px;top:494px;width:1px;height:23px;background:#3d3d3d"></div>
<div class="abs" style="left:1219px;top:494px;width:1px;height:23px;background:#7d7d7d"></div>
<svg class="abs" style="left:308.5px;top:498.5px" width="14" height="13" viewBox="0 0 14 13" fill="#fff"><rect x="5.4" y="0.8" width="7.8" height="2.6"/><rect x="2.8" y="4.6" width="8.8" height="2.6"/><rect x="0.2" y="8.4" width="5.4" height="2.6"/><rect x="0.2" y="11.6" width="5.4" height="1.2"/><path d="M5.2 2.9L7.6 0L10 2.9H8.3V5.6H3.4V4.6H6.9V2.9Z" fill="#222"/></svg>
<div class="t" style="left:334.60px;top:498.54px;letter-spacing:-0.322px;color:#fff;">Code</div>
<svg class="abs" style="left:386.2px;top:500.6px" width="11" height="11" viewBox="0 0 11 11"><path d="M0 0.3H6.6L4.1 3.2V8.6H2.6V3.2Z" fill="#8e8e8e"/><path d="M6.3 4.2L10 7L6.3 9.8Z" fill="#3e3e3e"/></svg>
<div class="t" style="left:411.30px;top:498.54px;letter-spacing:-0.077px;color:#fff;">Name</div>
<svg class="abs" style="left:500.2px;top:500.6px" width="11" height="11" viewBox="0 0 11 11"><path d="M0 0.3H6.6L4.1 3.2V8.6H2.6V3.2Z" fill="#8e8e8e"/><path d="M6.3 4.2L10 7L6.3 9.8Z" fill="#3e3e3e"/></svg>
<div class="abs" style="left:520px;top:494px;width:65px;height:23px;overflow:hidden"><div class="t" style="left:5.40px;top:4.54px;letter-spacing:-0.069px;color:#fff;">Dimensions</div></div>
<svg class="abs" style="left:595.6px;top:500.6px" width="11" height="11" viewBox="0 0 11 11"><path d="M0 0.3H6.6L4.1 3.2V8.6H2.6V3.2Z" fill="#8e8e8e"/><path d="M6.3 4.2L10 7L6.3 9.8Z" fill="#3e3e3e"/></svg>
<div class="t" style="left:627.00px;top:498.54px;letter-spacing:-0.147px;color:#fff;">Diameter</div>
<svg class="abs" style="left:695.9px;top:500.6px" width="11" height="11" viewBox="0 0 11 11"><path d="M0 0.3H6.6L4.1 3.2V8.6H2.6V3.2Z" fill="#8e8e8e"/><path d="M6.3 4.2L10 7L6.3 9.8Z" fill="#3e3e3e"/></svg>
<div class="t" style="left:721.00px;top:498.54px;letter-spacing:0.003px;color:#fff;">Width 1</div>
<svg class="abs" style="left:787.4px;top:500.6px" width="11" height="11" viewBox="0 0 11 11"><path d="M0 0.3H6.6L4.1 3.2V8.6H2.6V3.2Z" fill="#8e8e8e"/><path d="M6.3 4.2L10 7L6.3 9.8Z" fill="#3e3e3e"/></svg>
<div class="t" style="left:811.90px;top:498.54px;letter-spacing:-0.012px;color:#fff;">Height 1</div>
<svg class="abs" style="left:881px;top:500.6px" width="11" height="11" viewBox="0 0 11 11"><path d="M0 0.3H6.6L4.1 3.2V8.6H2.6V3.2Z" fill="#8e8e8e"/><path d="M6.3 4.2L10 7L6.3 9.8Z" fill="#3e3e3e"/></svg>
<div class="t" style="left:906.50px;top:498.54px;letter-spacing:-0.302px;color:#fff;">Fab Hours</div>
<svg class="abs" style="left:973px;top:500.6px" width="11" height="11" viewBox="0 0 11 11"><path d="M0 0.3H6.6L4.1 3.2V8.6H2.6V3.2Z" fill="#8e8e8e"/><path d="M6.3 4.2L10 7L6.3 9.8Z" fill="#3e3e3e"/></svg>
<div class="t" style="left:997.60px;top:498.54px;letter-spacing:-0.076px;color:#fff;">Install Hours</div>
<svg class="abs" style="left:1088.1px;top:500.6px" width="11" height="11" viewBox="0 0 11 11"><path d="M0 0.3H6.6L4.1 3.2V8.6H2.6V3.2Z" fill="#8e8e8e"/><path d="M6.3 4.2L10 7L6.3 9.8Z" fill="#3e3e3e"/></svg>
<div class="t" style="left:1112.60px;top:498.54px;letter-spacing:-0.005px;color:#fff;">Other Hours</div>
<svg class="abs" style="left:1199.3px;top:500.6px" width="11" height="11" viewBox="0 0 11 11"><path d="M0 0.3H6.6L4.1 3.2V8.6H2.6V3.2Z" fill="#8e8e8e"/><path d="M6.3 4.2L10 7L6.3 9.8Z" fill="#3e3e3e"/></svg>
<div class="t" style="left:1223.90px;top:498.54px;letter-spacing:-0.027px;color:#fff;">Item Cost</div>
<div class="abs" style="left:405.5px;top:517px;width:1px;height:22px;background:#f2f2f2"></div>
<div class="abs" style="left:519.5px;top:517px;width:1px;height:22px;background:#f2f2f2"></div>
<div class="abs" style="left:614.5px;top:517px;width:1px;height:22px;background:#f2f2f2"></div>
<div class="abs" style="left:714.5px;top:517px;width:1px;height:22px;background:#f2f2f2"></div>
<div class="abs" style="left:806.5px;top:517px;width:1px;height:22px;background:#f2f2f2"></div>
<div class="abs" style="left:899.5px;top:517px;width:1px;height:22px;background:#f2f2f2"></div>
<div class="abs" style="left:991.5px;top:517px;width:1px;height:22px;background:#f2f2f2"></div>
<div class="abs" style="left:1107.5px;top:517px;width:1px;height:22px;background:#f2f2f2"></div>
<div class="abs" style="left:1218.5px;top:517px;width:1px;height:22px;background:#f2f2f2"></div>
<svg class="abs" style="left:306.4px;top:524px" width="6" height="9" viewBox="0 0 6 9"><path d="M0 0L5.4 4.2L0 8.4Z" fill="#dadada"/></svg>
<div class="t" style="left:318.60px;top:521.84px;letter-spacing:0.000px;">1</div>
<div class="t" style="left:335.00px;top:521.84px;letter-spacing:-0.597px;">LD10</div>
<div class="t" style="left:411.60px;top:521.84px;letter-spacing:-0.132px;">Layin Diffuser</div>
<div class="t" style="left:525.40px;top:521.84px;letter-spacing:-0.007px;">24&quot;x24&quot; - 10&quot;</div>
<div class="t" style="left:619.50px;top:521.84px;letter-spacing:-0.824px;">10</div>
<div class="t" style="left:720.30px;top:521.84px;letter-spacing:-0.574px;">24</div>
<div class="t" style="left:811.30px;top:521.84px;letter-spacing:-0.574px;">24</div>
<div class="t" style="left:905.80px;top:521.84px;letter-spacing:0.000px;">0</div>
<div class="t" style="left:996.90px;top:521.84px;letter-spacing:-0.594px;">0.5</div>
<div class="t" style="left:1111.70px;top:521.84px;letter-spacing:-0.439px;">0.05</div>
<div class="abs" style="left:329px;top:539px;width:955px;height:22px;background:#96bc23;border-top:1px solid #a4daec;border-bottom:1px solid #a4daec;border-left:1px solid #a4daec;border-radius:4px 0 0 4px"></div>
<div class="abs" style="left:405.5px;top:540px;width:1px;height:20px;background:#e4efc4"></div>
<div class="abs" style="left:519.5px;top:540px;width:1px;height:20px;background:#e4efc4"></div>
<div class="abs" style="left:614.5px;top:540px;width:1px;height:20px;background:#e4efc4"></div>
<div class="abs" style="left:714.5px;top:540px;width:1px;height:20px;background:#e4efc4"></div>
<div class="abs" style="left:806.5px;top:540px;width:1px;height:20px;background:#e4efc4"></div>
<div class="abs" style="left:899.5px;top:540px;width:1px;height:20px;background:#e4efc4"></div>
<div class="abs" style="left:991.5px;top:540px;width:1px;height:20px;background:#e4efc4"></div>
<div class="abs" style="left:1107.5px;top:540px;width:1px;height:20px;background:#e4efc4"></div>
<div class="abs" style="left:1218.5px;top:540px;width:1px;height:20px;background:#e4efc4"></div>
<svg class="abs" style="left:306.4px;top:546px" width="7" height="9" viewBox="0 0 7 9"><path d="M0 0L6.5 4.2L0 8.4Z" fill="#000"/></svg>
<div class="t" style="left:318.60px;top:543.84px;letter-spacing:0.000px;">2</div>
<div class="t" style="left:335.00px;top:543.84px;letter-spacing:-0.597px;">LD12</div>
<div class="t" style="left:411.60px;top:543.84px;letter-spacing:-0.132px;">Layin Diffuser</div>
<div class="t" style="left:525.40px;top:543.84px;letter-spacing:-0.007px;">24&quot;x24&quot; - 12&quot;</div>
<div class="t" style="left:619.50px;top:543.84px;letter-spacing:-0.824px;">12</div>
<div class="t" style="left:720.30px;top:543.84px;letter-spacing:-0.574px;">24</div>
<div class="t" style="left:811.30px;top:543.84px;letter-spacing:-0.574px;">24</div>
<div class="t" style="left:905.80px;top:543.84px;letter-spacing:0.000px;">0</div>
<div class="t" style="left:996.90px;top:543.84px;letter-spacing:-0.594px;">0.5</div>
<div class="t" style="left:1111.70px;top:543.84px;letter-spacing:-0.439px;">0.05</div>
<div class="abs" style="left:405.5px;top:561px;width:1px;height:22px;background:#f2f2f2"></div>
<div class="abs" style="left:519.5px;top:561px;width:1px;height:22px;background:#f2f2f2"></div>
<div class="abs" style="left:614.5px;top:561px;width:1px;height:22px;background:#f2f2f2"></div>
<div class="abs" style="left:714.5px;top:561px;width:1px;height:22px;background:#f2f2f2"></div>
<div class="abs" style="left:806.5px;top:561px;width:1px;height:22px;background:#f2f2f2"></div>
<div class="abs" style="left:899.5px;top:561px;width:1px;height:22px;background:#f2f2f2"></div>
<div class="abs" style="left:991.5px;top:561px;width:1px;height:22px;background:#f2f2f2"></div>
<div class="abs" style="left:1107.5px;top:561px;width:1px;height:22px;background:#f2f2f2"></div>
<div class="abs" style="left:1218.5px;top:561px;width:1px;height:22px;background:#f2f2f2"></div>
<svg class="abs" style="left:306.4px;top:568px" width="6" height="9" viewBox="0 0 6 9"><path d="M0 0L5.4 4.2L0 8.4Z" fill="#dadada"/></svg>
<div class="t" style="left:318.60px;top:565.84px;letter-spacing:0.000px;">3</div>
<div class="t" style="left:335.00px;top:565.84px;letter-spacing:-0.597px;">LD14</div>
<div class="t" style="left:411.60px;top:565.84px;letter-spacing:-0.132px;">Layin Diffuser</div>
<div class="t" style="left:525.40px;top:565.84px;letter-spacing:-0.007px;">24&quot;x24&quot; - 14&quot;</div>
<div class="t" style="left:619.50px;top:565.84px;letter-spacing:-0.824px;">14</div>
<div class="t" style="left:720.30px;top:565.84px;letter-spacing:-0.574px;">24</div>
<div class="t" style="left:811.30px;top:565.84px;letter-spacing:-0.574px;">24</div>
<div class="t" style="left:905.80px;top:565.84px;letter-spacing:0.000px;">0</div>
<div class="t" style="left:996.90px;top:565.84px;letter-spacing:-0.594px;">0.5</div>
<div class="t" style="left:1111.70px;top:565.84px;letter-spacing:-0.439px;">0.05</div>
<div class="abs" style="left:329px;top:583px;width:955px;height:22px;background:#e2e2e2"></div>
<div class="abs" style="left:405.5px;top:583px;width:1px;height:22px;background:#f2f2f2"></div>
<div class="abs" style="left:519.5px;top:583px;width:1px;height:22px;background:#f2f2f2"></div>
<div class="abs" style="left:614.5px;top:583px;width:1px;height:22px;background:#f2f2f2"></div>
<div class="abs" style="left:714.5px;top:583px;width:1px;height:22px;background:#f2f2f2"></div>
<div class="abs" style="left:806.5px;top:583px;width:1px;height:22px;background:#f2f2f2"></div>
<div class="abs" style="left:899.5px;top:583px;width:1px;height:22px;background:#f2f2f2"></div>
<div class="abs" style="left:991.5px;top:583px;width:1px;height:22px;background:#f2f2f2"></div>
<div class="abs" style="left:1107.5px;top:583px;width:1px;height:22px;background:#f2f2f2"></div>
<div class="abs" style="left:1218.5px;top:583px;width:1px;height:22px;background:#f2f2f2"></div>
<svg class="abs" style="left:306.4px;top:590px" width="6" height="9" viewBox="0 0 6 9"><path d="M0 0L5.4 4.2L0 8.4Z" fill="#dadada"/></svg>
<div class="t" style="left:318.60px;top:587.84px;letter-spacing:0.000px;">4</div>
<div class="t" style="left:335.00px;top:587.84px;letter-spacing:-0.805px;">LD6</div>
<div class="t" style="left:411.60px;top:587.84px;letter-spacing:-0.132px;">Layin Diffuser</div>
<div class="t" style="left:525.40px;top:587.84px;letter-spacing:-0.018px;">24&quot;x24&quot; - 6&quot;</div>
<div class="t" style="left:619.50px;top:587.84px;letter-spacing:-0.900px;">6</div>
<div class="t" style="left:720.30px;top:587.84px;letter-spacing:-0.574px;">24</div>
<div class="t" style="left:811.30px;top:587.84px;letter-spacing:-0.574px;">24</div>
<div class="t" style="left:905.80px;top:587.84px;letter-spacing:0.000px;">0</div>
<div class="t" style="left:996.90px;top:587.84px;letter-spacing:-0.594px;">0.5</div>
<div class="t" style="left:1111.70px;top:587.84px;letter-spacing:-0.439px;">0.05</div>
<div class="abs" style="left:405.5px;top:605px;width:1px;height:22px;background:#f2f2f2"></div>
<div class="abs" style="left:519.5px;top:605px;width:1px;height:22px;background:#f2f2f2"></div>
<div class="abs" style="left:614.5px;top:605px;width:1px;height:22px;background:#f2f2f2"></div>
<div class="abs" style="left:714.5px;top:605px;width:1px;height:22px;background:#f2f2f2"></div>
<div class="abs" style="left:806.5px;top:605px;width:1px;height:22px;background:#f2f2f2"></div>
<div class="abs" style="left:899.5px;top:605px;width:1px;height:22px;background:#f2f2f2"></div>
<div class="abs" style="left:991.5px;top:605px;width:1px;height:22px;background:#f2f2f2"></div>
<div class="abs" style="left:1107.5px;top:605px;width:1px;height:22px;background:#f2f2f2"></div>
<div class="abs" style="left:1218.5px;top:605px;width:1px;height:22px;background:#f2f2f2"></div>
<svg class="abs" style="left:306.4px;top:612px" width="6" height="9" viewBox="0 0 6 9"><path d="M0 0L5.4 4.2L0 8.4Z" fill="#dadada"/></svg>
<div class="t" style="left:318.60px;top:609.84px;letter-spacing:0.000px;">5</div>
<div class="t" style="left:335.00px;top:609.84px;letter-spacing:-0.805px;">LD8</div>
<div class="t" style="left:411.60px;top:609.84px;letter-spacing:-0.132px;">Layin Diffuser</div>
<div class="t" style="left:525.40px;top:609.84px;letter-spacing:-0.018px;">24&quot;x24&quot; - 8&quot;</div>
<div class="t" style="left:619.50px;top:609.84px;letter-spacing:-0.900px;">8</div>
<div class="t" style="left:720.30px;top:609.84px;letter-spacing:-0.574px;">24</div>
<div class="t" style="left:811.30px;top:609.84px;letter-spacing:-0.574px;">24</div>
<div class="t" style="left:905.80px;top:609.84px;letter-spacing:0.000px;">0</div>
<div class="t" style="left:996.90px;top:609.84px;letter-spacing:-0.594px;">0.5</div>
<div class="t" style="left:1111.70px;top:609.84px;letter-spacing:-0.439px;">0.05</div>
<div class="abs" style="left:302px;top:771px;width:981px;height:18px;background:linear-gradient(#dbdbdb,#e1e1df)"></div>
<div class="abs" style="left:319px;top:776px;width:915px;height:8px;background:linear-gradient(#8c8c8c,#6c6c6c);border-radius:2.5px"></div>
<svg class="abs" style="left:307px;top:775.5px" width="6" height="9" viewBox="0 0 6 9"><path d="M5.4 0L0 4.2L5.4 8.4Z" fill="#7a7a7a"/></svg>
<svg class="abs" style="left:1273px;top:775.5px" width="6" height="9" viewBox="0 0 6 9"><path d="M0 0L5.4 4.2L0 8.4Z" fill="#7a7a7a"/></svg>
<div class="abs" style="left:1px;top:797px;width:1290px;height:28px;background:linear-gradient(#dfe9f6 0%,#cbd9ea 30%,#b3c6df 62%,#b0c4de 100%)"></div>
<div class="t" style="left:4.20px;top:805.29px;font-size:11px;line-height:13px;letter-spacing:-0.020px;color:#1c3873;">Status:</div>
<div class="t" style="left:50.10px;top:805.29px;font-size:11px;line-height:13px;letter-spacing:-0.040px;color:#1c3873;">Ready</div>
<div class="abs" style="left:0px;top:31px;width:1px;height:795px;background:#4961b6"></div>
<div class="abs" style="left:1291px;top:31px;width:1px;height:795px;background:#4961b6"></div>
<div class="abs" style="left:0px;top:825px;width:1292px;height:1px;background:#4961b6"></div>
</div>
</body>
</html>
